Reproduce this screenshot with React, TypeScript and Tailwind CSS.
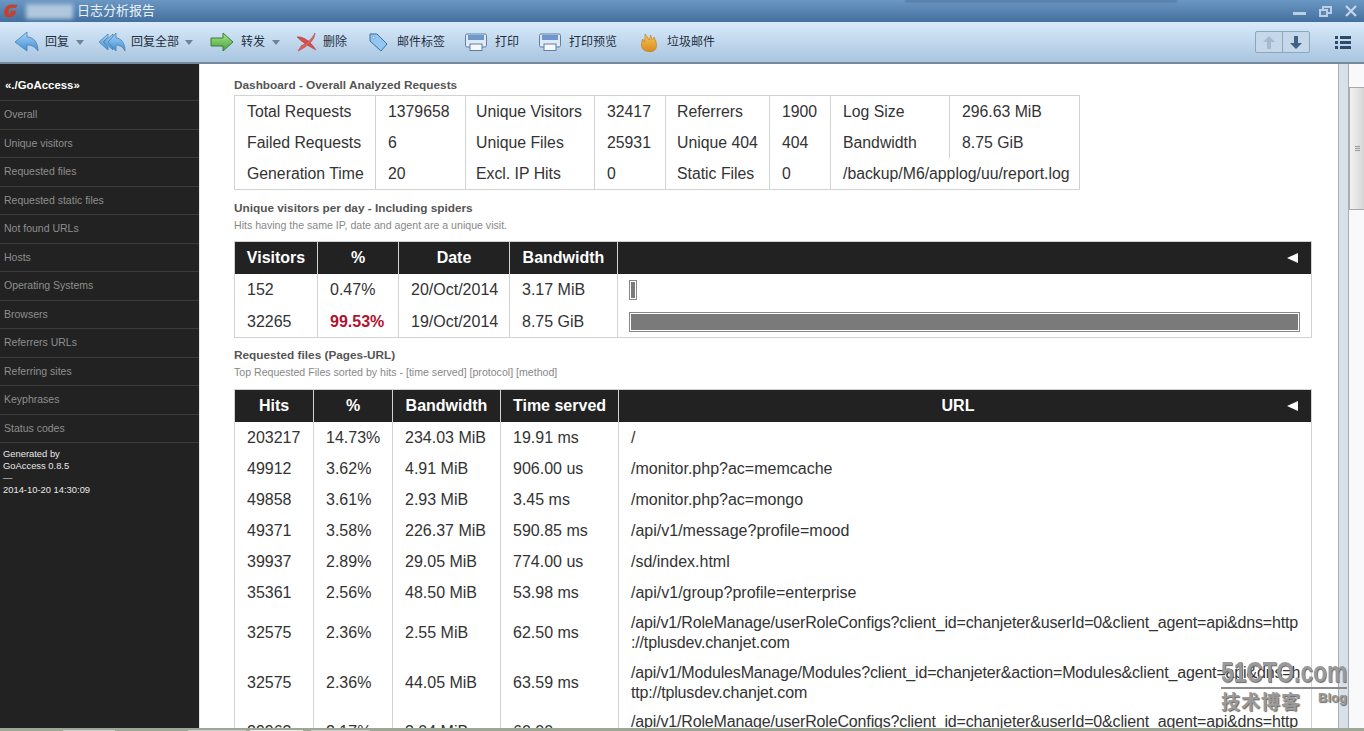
import type { ReactNode } from "react";

const sidebarItems = [
  "Overall",
  "Unique visitors",
  "Requested files",
  "Requested static files",
  "Not found URLs",
  "Hosts",
  "Operating Systems",
  "Browsers",
  "Referrers URLs",
  "Referring sites",
  "Keyphrases",
  "Status codes",
];

const roleUrl = [
  "/api/v1/RoleManage/userRoleConfigs?client_id=chanjeter&userId=0&client_agent=api&dns=http",
  "://tplusdev.chanjet.com",
];

const requestedFiles = [
  { hits: "203217", pct: "14.73%", bw: "234.03 MiB", time: "19.91 ms", url: ["/"] },
  { hits: "49912", pct: "3.62%", bw: "4.91 MiB", time: "906.00 us", url: ["/monitor.php?ac=memcache"] },
  { hits: "49858", pct: "3.61%", bw: "2.93 MiB", time: "3.45 ms", url: ["/monitor.php?ac=mongo"] },
  { hits: "49371", pct: "3.58%", bw: "226.37 MiB", time: "590.85 ms", url: ["/api/v1/message?profile=mood"] },
  { hits: "39937", pct: "2.89%", bw: "29.05 MiB", time: "774.00 us", url: ["/sd/index.html"] },
  { hits: "35361", pct: "2.56%", bw: "48.50 MiB", time: "53.98 ms", url: ["/api/v1/group?profile=enterprise"] },
  { hits: "32575", pct: "2.36%", bw: "2.55 MiB", time: "62.50 ms", url: roleUrl },
  {
    hits: "32575",
    pct: "2.36%",
    bw: "44.05 MiB",
    time: "63.59 ms",
    url: [
      "/api/v1/ModulesManage/Modules?client_id=chanjeter&action=Modules&client_agent=api&dns=h",
      "ttp://tplusdev.chanjet.com",
    ],
  },
  { hits: "29963", pct: "2.17%", bw: "3.04 MiB", time: "60.00 ms", url: roleUrl },
];

function IconDefs() {
  return (
    <svg width="0" height="0" className="absolute">
      <defs>
        <linearGradient id="blueFill" x1="0" y1="0" x2="0" y2="1">
          <stop offset="0" stopColor="#a9d6f8" />
          <stop offset="1" stopColor="#3f8ed6" />
        </linearGradient>
        <linearGradient id="greenFill" x1="0" y1="0" x2="0" y2="1">
          <stop offset="0" stopColor="#a8e68c" />
          <stop offset="1" stopColor="#45a03a" />
        </linearGradient>
        <linearGradient id="flameFill" x1="0" y1="0" x2="0" y2="1">
          <stop offset="0" stopColor="#f4c65a" />
          <stop offset="1" stopColor="#d98a1c" />
        </linearGradient>
      </defs>
    </svg>
  );
}

function ReplyIcon() {
  return (
    <svg width="25" height="22" viewBox="0 0 25 22">
      <path d="M1 11 13 1v5c7 0 11 6 11 14-3-4-6-6-11-6v6z" fill="url(#blueFill)" stroke="#4a7fae" strokeWidth="0.8" />
    </svg>
  );
}

function ReplyAllIcon() {
  return (
    <svg width="28" height="22" viewBox="0 0 28 22">
      <path d="M1 11 10 3v3L5 11l5 5v3z" fill="url(#blueFill)" stroke="#4a7fae" strokeWidth="0.8" />
      <path d="M6 11 15 3v3l-5 5 5 5v3z" fill="url(#blueFill)" stroke="#4a7fae" strokeWidth="0.8" />
      <path d="M10 11 18 2v5c5 0 9 5 9 13-2-4-5-6-9-6v6z" fill="url(#blueFill)" stroke="#4a7fae" strokeWidth="0.8" />
    </svg>
  );
}

function ForwardIcon() {
  return (
    <svg width="24" height="20" viewBox="0 0 24 20">
      <path d="M1 6h12V1l10 9-10 9v-5H1z" fill="url(#greenFill)" stroke="#3b7d3a" strokeWidth="1" />
    </svg>
  );
}

function DeleteIcon() {
  return (
    <svg width="20" height="20" viewBox="0 0 20 20">
      <path d="M0 5c6-1 13 4 19 13-6-3-13-7-19-13z" fill="#d4504c" stroke="#a83c3c" strokeWidth="0.5" />
      <path d="M18 1c0 6-6 13-17 18 1-2 3-4 3-5 6-3 11-7 14-13z" fill="#e2605a" stroke="#a83c3c" strokeWidth="0.5" />
    </svg>
  );
}

function TagIcon() {
  return (
    <svg width="19" height="19" viewBox="0 0 19 19">
      <path d="M1 1h7l10 10-6 7L1 8z" fill="#93c7f2" stroke="#3a6fa5" strokeWidth="1" />
      <circle cx="4.5" cy="4.5" r="1.3" fill="#fff" stroke="#3a6fa5" strokeWidth="0.5" />
    </svg>
  );
}

function PrintIcon() {
  return (
    <svg width="22" height="18" viewBox="0 0 22 18">
      <rect x="0.5" y="1" width="21" height="13" rx="1.5" fill="#dfeaf6" stroke="#5e7fa3" />
      <rect x="3" y="2" width="16" height="5" fill="#6f97cf" />
      <rect x="5" y="11" width="12" height="6.5" fill="#f6f8fb" stroke="#5e7fa3" />
    </svg>
  );
}

function FlameIcon() {
  return (
    <svg width="17" height="19" viewBox="0 0 17 19">
      <path d="M8.500 18.500c-5 0-8-2.500-8-6.500 0-2 .5-4 1-6 1 1 1.500 2 2 3 .5-3 .5-5 .5-8 2 2 3 4 4 6 1-2 1.500-3.500 1.500-5 1 2 1.500 4 2 5 .5-.5 1.500-1.500 1.500-3 1.500 3 2.500 5.500 2.500 8.500 0 4-3 6.500-7 6.500z" fill="url(#flameFill)" stroke="#b97716" strokeWidth="0.6" />
    </svg>
  );
}

function Caret({ className }: { className: string }) {
  return <span className={`h-0 w-0 border-x-[4px] border-t-[5px] border-x-transparent border-t-[#6f8296] ${className}`} />;
}

function ToolButton({
  icon,
  label,
  className,
  labelClass,
  caretClass,
}: {
  icon: ReactNode;
  label: string;
  className: string;
  labelClass: string;
  caretClass?: string;
}) {
  return (
    <div className={`flex items-center ${className}`}>
      {icon}
      <span className={`text-[12px] text-[#1f2f40] ${labelClass}`}>{label}</span>
      {caretClass && <Caret className={caretClass} />}
    </div>
  );
}

function TitleBar() {
  return (
    <div className="flex h-[22px] shrink-0 items-center bg-gradient-to-b from-[#6b97c4] to-[#44709f]">
      <svg className="ml-[4px]" width="14" height="14" viewBox="0 0 14 14">
        <path
          d="M13 1H7C3 1 1 4 0.500 8c-.3 3 1.500 5 4.500 5 3.500 0 6-2 7-6H7L6 9.500h2.500C8 10.500 6.500 11 5.500 10.500 4 10 4 8 4.500 6.500 5 4.500 6 3.500 8 3.500h4z"
          fill="#c8402c"
          stroke="#c8402c"
          strokeWidth="0.6"
        />
      </svg>
      <div className="ml-[8px] h-[15px] w-[47px] bg-[#b0c8de] blur-[2px]" />
      <span className="ml-[4px] text-[13px] text-[#e8f0f8]">日志分析报告</span>
      <div className="ml-auto flex items-center gap-[13px] pr-[7px]">
        <span className="mt-[5px] h-[3px] w-[13px] bg-[#b9cfe6]" />
        <svg width="13" height="11" viewBox="0 0 13 11" fill="none" stroke="#b9cfe6" strokeWidth="2">
          <rect x="4" y="1" width="8" height="6" />
          <rect x="1" y="4" width="7" height="6" fill="#5c88b6" />
        </svg>
        <svg width="12" height="12" viewBox="0 0 12 12" stroke="#c3d6ea" strokeWidth="2.2">
          <path d="M1 1l10 10M11 1 1 11" />
        </svg>
      </div>
    </div>
  );
}

function Toolbar() {
  return (
    <div className="flex h-[42px] shrink-0 items-center border-b-2 border-b-[#76899c] bg-gradient-to-b from-[#d9eafa] to-[#a9c5e0]">
      <ToolButton className="ml-[14px]" icon={<ReplyIcon />} label="回复" labelClass="ml-[6px]" caretClass="ml-[7px]" />
      <ToolButton className="ml-[14px]" icon={<ReplyAllIcon />} label="回复全部" labelClass="ml-[5px]" caretClass="ml-[6px]" />
      <ToolButton className="ml-[17px]" icon={<ForwardIcon />} label="转发" labelClass="ml-[7px]" caretClass="ml-[7px]" />
      <ToolButton className="ml-[17px]" icon={<DeleteIcon />} label="删除" labelClass="ml-[6px]" />
      <ToolButton className="ml-[22px]" icon={<TagIcon />} label="邮件标签" labelClass="ml-[9px]" />
      <ToolButton className="ml-[20px]" icon={<PrintIcon />} label="打印" labelClass="ml-[8px]" />
      <ToolButton className="ml-[20px]" icon={<PrintIcon />} label="打印预览" labelClass="ml-[8px]" />
      <ToolButton className="ml-[24px]" icon={<FlameIcon />} label="垃圾邮件" labelClass="ml-[9px]" />
      <div className="ml-auto flex h-[22px] items-stretch rounded-[2px] border border-[#8fa5ba] bg-[#c5d8ea]">
        <div className="flex w-[27px] items-center justify-center border-r border-r-[#8fa5ba]">
          <svg width="12" height="13" viewBox="0 0 12 13" fill="#a4bacf">
            <path d="M6 0l6 6H8v7H4V6H0z" />
          </svg>
        </div>
        <div className="flex w-[26px] items-center justify-center">
          <svg width="12" height="13" viewBox="0 0 12 13" fill="#3f6184">
            <path d="M6 13l6-6H8V0H4v7H0z" />
          </svg>
        </div>
      </div>
      <svg className="mr-[13px] ml-[25px]" width="16" height="13" viewBox="0 0 16 13" fill="#2f4a68">
        <path d="M0 0h3v3H0zM5 0h11v3H5zM0 5h3v3H0zM5 5h11v3H5zM0 10h3v3H0zM5 10h11v3H5z" />
      </svg>
    </div>
  );
}

function Sidebar() {
  return (
    <div className="w-[199px] shrink-0 bg-[#222222]">
      <div className="flex h-[37px] items-center border-b border-b-[#3b3b3b] pt-[8px] pl-[5px] text-[11.4px] font-bold text-white">
        «./GoAccess»
      </div>
      {sidebarItems.map((item) => (
        <div
          key={item}
          className="flex h-[28.5px] items-center border-b border-b-[#3b3b3b] pt-[1px] pl-[4px] text-[10.5px] text-[#8e8e8e]"
        >
          {item}
        </div>
      ))}
      <div className="pt-[5px] pl-[3px] text-[9.4px] leading-[12px] text-[#e8e8e8]">
        <div>Generated by</div>
        <div>GoAccess 0.8.5</div>
        <div>—</div>
        <div>2014-10-20 14:30:09</div>
      </div>
    </div>
  );
}

function Cell({
  children,
  className = "px-[12px]",
  colSpan,
}: {
  children?: ReactNode;
  className?: string;
  colSpan?: number;
}) {
  return (
    <td colSpan={colSpan} className={`border-x border-x-[#d2d2d2] align-middle ${className}`}>
      {children}
    </td>
  );
}

function Dashboard() {
  const rows = [
    ["Total Requests", "1379658", "Unique Visitors", "32417", "Referrers", "1900", "Log Size", "296.63 MiB"],
    ["Failed Requests", "6", "Unique Files", "25931", "Unique 404", "404", "Bandwidth", "8.75 GiB"],
    ["Generation Time", "20", "Excl. IP Hits", "0", "Static Files", "0"],
  ];
  const widths = [141, 90, 129, 71, 104, 61, 119, 130];

  return (
    <table className="mt-[3px] w-[845px] table-fixed border-collapse border border-[#d2d2d2] text-[15.8px] whitespace-nowrap text-[#333333]">
      <colgroup>
        {widths.map((w, i) => (
          <col key={i} style={{ width: w }} />
        ))}
      </colgroup>
      <tbody>
        {rows.map((row, i) => (
          <tr key={i} className={i === 2 ? "h-[32px]" : "h-[31px]"}>
            {row.map((v, j) => (
              <Cell key={j} className={`pt-[2px] pr-[4px] ${j === 2 ? "pl-[10px]" : j === 4 ? "pl-[11px]" : "pl-[12px]"}`}>
                {v}
              </Cell>
            ))}
            {i === 2 && (
              <Cell colSpan={2} className="pt-[2px] pl-[12px]">
                /backup/M6/applog/uu/report.log
              </Cell>
            )}
          </tr>
        ))}
      </tbody>
    </table>
  );
}

function SectionTitle({ title, note, className }: { title: string; note: string; className: string }) {
  return (
    <div className={className}>
      <div className="text-[11.8px] leading-[14px] font-bold text-[#555555]">{title}</div>
      <div className="mt-[4px] text-[10.6px] leading-[12px] text-[#888888]">{note}</div>
    </div>
  );
}

function HeadCell({ children, width, className = "" }: { children?: ReactNode; width?: number; className?: string }) {
  return (
    <th
      style={width ? { width } : undefined}
      className={`relative border-x border-x-[#d2d2d2] bg-[#222222] text-center text-[16px] font-bold text-white ${className}`}
    >
      {children}
    </th>
  );
}

function Collapse() {
  return (
    <span className="absolute top-1/2 right-[13px] h-0 w-0 -translate-y-1/2 border-y-[5px] border-r-[11px] border-y-transparent border-r-white" />
  );
}

function Bar({ width, height }: { width: string; height: number }) {
  return (
    <div style={{ width, height }} className="border border-[#888888] bg-white p-[1px]">
      <div className="h-full w-full bg-[#7a7a7a]" />
    </div>
  );
}

function VisitorsTable() {
  const rows = [
    { visitors: "152", pct: "0.47%", date: "20/Oct/2014", bw: "3.17 MiB", bar: "8px", hot: false },
    { visitors: "32265", pct: "99.53%", date: "19/Oct/2014", bw: "8.75 GiB", bar: "100%", hot: true },
  ];
  return (
    <table className="mt-[10px] w-[1078px] table-fixed border-collapse border border-[#d2d2d2] text-[16px] whitespace-nowrap text-[#333333]">
      <thead>
        <tr className="h-[32px]">
          <HeadCell width={83}>Visitors</HeadCell>
          <HeadCell width={81}>%</HeadCell>
          <HeadCell width={111}>Date</HeadCell>
          <HeadCell width={108}>Bandwidth</HeadCell>
          <HeadCell>
            <Collapse />
          </HeadCell>
        </tr>
      </thead>
      <tbody>
        {rows.map((r) => (
          <tr key={r.date} className={r.hot ? "h-[33px]" : "h-[31px]"}>
            <Cell className="px-[12px] pt-[2px]">{r.visitors}</Cell>
            <Cell className={`px-[12px] pt-[2px] ${r.hot ? "font-bold text-[#b3112f]" : ""}`}>{r.pct}</Cell>
            <Cell className="px-[12px] pt-[2px]">{r.date}</Cell>
            <Cell className="px-[12px] pt-[2px]">{r.bw}</Cell>
            <Cell className="px-[11px] pt-[2px]">
              <Bar width={r.bar} height={20} />
            </Cell>
          </tr>
        ))}
      </tbody>
    </table>
  );
}

function FilesTable() {
  return (
    <table className="mt-[11px] w-[1078px] table-fixed border-collapse border border-[#d2d2d2] text-[16px] leading-[20px] whitespace-nowrap text-[#333333]">
      <thead>
        <tr className="h-[32px]">
          <HeadCell width={79}>Hits</HeadCell>
          <HeadCell width={79}>%</HeadCell>
          <HeadCell width={108}>Bandwidth</HeadCell>
          <HeadCell width={118}>Time served</HeadCell>
          <HeadCell className="pr-[14px]">
            URL
            <Collapse />
          </HeadCell>
        </tr>
      </thead>
      <tbody>
        {requestedFiles.map((row, i) => {
          const wrapped = row.url.length > 1;
          const pad = wrapped ? "px-[12px]" : "px-[12px] pt-[2px]";
          return (
            <tr key={i} className={wrapped ? "h-[50px]" : "h-[31px]"}>
              <Cell className={pad}>{row.hits}</Cell>
              <Cell className={pad}>{row.pct}</Cell>
              <Cell className={pad}>{row.bw}</Cell>
              <Cell className={pad}>{row.time}</Cell>
              <Cell className={wrapped ? "px-[12px] tracking-[-0.16px]" : pad}>
                {row.url.map((line) => (
                  <div key={line}>{line}</div>
                ))}
              </Cell>
            </tr>
          );
        })}
      </tbody>
    </table>
  );
}

function Watermark() {
  return (
    <div className="pointer-events-none absolute top-[656px] left-[1221px] w-[126px] text-[#9a9a9a] [text-shadow:1px_1px_1px_#666666]">
      <div className="origin-left scale-x-[0.76] text-[30px] leading-[31px] font-bold whitespace-nowrap">51CTO.com</div>
      <div className="h-[2px] bg-[#8b8b8b]" />
      <div className="flex items-start justify-between">
        <span className="text-[19px] leading-[27px] font-bold tracking-[1px]">技术博客</span>
        <span className="mt-[1px] text-[13px] leading-[16px] font-bold">Blog</span>
      </div>
    </div>
  );
}

export default function App() {
  return (
    <div className="relative flex h-[731px] w-[1364px] flex-col overflow-hidden bg-white font-['Liberation_Sans','Noto_Sans_CJK_SC',sans-serif]">
      <IconDefs />
      <TitleBar />
      <Toolbar />
      <div className="flex min-h-0 flex-1">
        <Sidebar />
        <div className="w-[1px] shrink-0 bg-[#e6e6e6]" />
        <div className="min-w-0 flex-1 overflow-hidden pt-[14px] pl-[34px]">
          <div className="text-[11.8px] leading-[14px] font-bold text-[#555555]">Dashboard - Overall Analyzed Requests</div>
          <Dashboard />
          <SectionTitle
            className="mt-[11px]"
            title="Unique visitors per day - Including spiders"
            note="Hits having the same IP, date and agent are a unique visit."
          />
          <VisitorsTable />
          <SectionTitle
            className="mt-[10px]"
            title="Requested files (Pages-URL)"
            note="Top Requested Files sorted by hits - [time served] [protocol] [method]"
          />
          <FilesTable />
        </div>
        <div className="flex w-[26px] shrink-0">
          <div className="w-[11px] border-x border-x-[#a5adb5] bg-[#d9e1e8]" />
          <div className="flex-1 bg-[#f9f9fb]">
            <div className="mt-[23px] flex h-[123px] flex-col items-center justify-center gap-[1px] border-y border-l border-[#a9a9a9] bg-gradient-to-r from-[#f2f2f2] to-[#d6d6d6]">
              <span className="h-[1px] w-[5px] bg-[#999999]" />
              <span className="h-[1px] w-[5px] bg-[#999999]" />
              <span className="h-[1px] w-[5px] bg-[#999999]" />
            </div>
          </div>
        </div>
      </div>
      <div className="flex h-[3px] shrink-0 items-end bg-[#9ea796]">
        <span className="ml-[63px] h-[1px] w-[52px] bg-[#c9cfc4]" />
        <span className="ml-[73px] h-[1px] w-[58px] bg-[#c9cfc4]" />
        <span className="ml-[4px] h-[1px] w-[53px] bg-[#e8ebe5]" />
        <span className="ml-[8px] h-[1px] w-[59px] bg-[#c9cfc4]" />
      </div>
      <div className="absolute top-0 left-[905px] h-[2px] w-[272px] bg-[#4f75a0] blur-[1px]" />
      <Watermark />
    </div>
  );
}
